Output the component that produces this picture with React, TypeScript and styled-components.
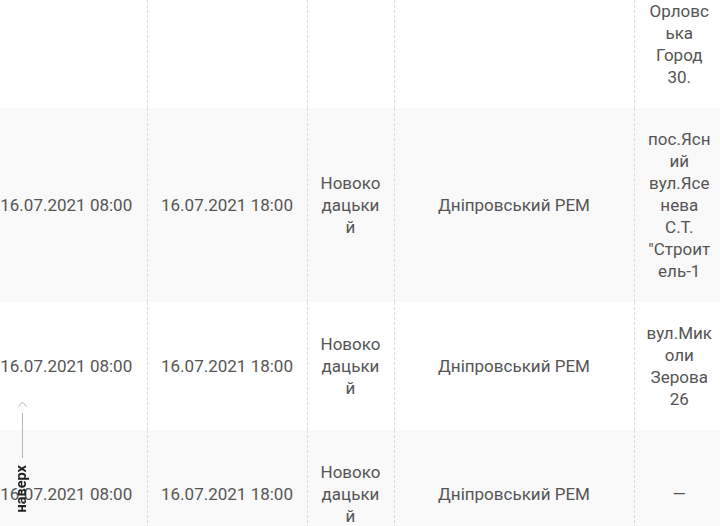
import styled, { createGlobalStyle } from 'styled-components'

const Global = createGlobalStyle`
  html, body {
    margin: 0;
    padding: 0;
    background: #ffffff;
    overflow: hidden;
  }
  body {
    font-family: 'Roboto', 'Liberation Sans', sans-serif;
  }
`

const Page = styled.div`
  width: 720px;
  height: 526px;
  overflow: hidden;
  position: relative;
`

const Table = styled.table`
  border-collapse: collapse;
  table-layout: fixed;
  width: 738px;
  margin: -20px 0 0 -14px;
`

const Row = styled.tr<{ $shade?: boolean }>`
  background: ${p => (p.$shade ? '#f9f9f9' : '#ffffff')};
`

const Cell = styled.td<{ $w: number; $pad?: number; $minH?: number }>`
  width: ${p => p.$w}px;
  ${p => (p.$minH ? `height: ${p.$minH}px;` : '')}
  box-sizing: border-box;
  padding: 20px ${p => p.$pad ?? 10}px;
  text-align: center;
  vertical-align: middle;
  color: #555555;
  font-size: 17px;
  line-height: 22px;
  overflow-wrap: anywhere;
  border-left: 1px dashed #dcdcdc;
  &:first-child {
    border-left: none;
  }
`

const BackToTop = styled.a`
  position: fixed;
  left: 14px;
  top: 401px;
  width: 16px;
  display: flex;
  flex-direction: column;
  align-items: center;
  text-decoration: none;
  cursor: pointer;
`

const Line = styled.span`
  display: block;
  width: 1px;
  height: 45px;
  margin-top: 6px;
  background: #b5b5b5;
`

const UpLabel = styled.span`
  margin-top: 7px;
  writing-mode: vertical-rl;
  transform: rotate(180deg);
  font-family: 'Roboto', 'Liberation Sans', sans-serif;
  font-size: 14.5px;
  font-weight: 700;
  line-height: 16px;
  color: #222222;
`

const widths = [161, 160, 87, 240, 90]

type Entry = { from: string; to: string; district: string; rem: string; place: string }

const rows: Entry[] = [
  { from: '16.07.2021 08:00', to: '16.07.2021 18:00', district: '', rem: '', place: 'Орловська Город 30.' },
  { from: '16.07.2021 08:00', to: '16.07.2021 18:00', district: 'Новокодацький', rem: 'Дніпровський РЕМ', place: 'пос.Ясний вул.Ясенева С.Т. "Строитель-1' },
  { from: '16.07.2021 08:00', to: '16.07.2021 18:00', district: 'Новокодацький', rem: 'Дніпровський РЕМ', place: 'вул.Миколи Зерова 26' },
  { from: '16.07.2021 08:00', to: '16.07.2021 18:00', district: 'Новокодацький', rem: 'Дніпровський РЕМ', place: '—' },
]

export default function App() {
  return (
    <>
      <Global />
      <Page>
        <Table>
          <tbody>
            {rows.map((r, i) => {
              const first = i === 0
              const minH = i === rows.length - 1 ? 128 : undefined
              return (
                <Row key={i} $shade={i % 2 === 1}>
                  <Cell $w={widths[0]} $minH={minH}>{first ? '' : r.from}</Cell>
                  <Cell $w={widths[1]}>{first ? '' : r.to}</Cell>
                  <Cell $w={widths[2]}>{r.district}</Cell>
                  <Cell $w={widths[3]}>{r.rem}</Cell>
                  <Cell $w={widths[4]} $pad={12}>{r.place}</Cell>
                </Row>
              )
            })}
          </tbody>
        </Table>
        <BackToTop>
          <svg width="9" height="6" viewBox="0 0 9 6" fill="none">
            <path d="M0.5 5.5 L4.5 1 L8.5 5.5" stroke="#b5b5b5" strokeWidth="1" />
          </svg>
          <Line />
          <UpLabel>наверх</UpLabel>
        </BackToTop>
      </Page>
    </>
  )
}
